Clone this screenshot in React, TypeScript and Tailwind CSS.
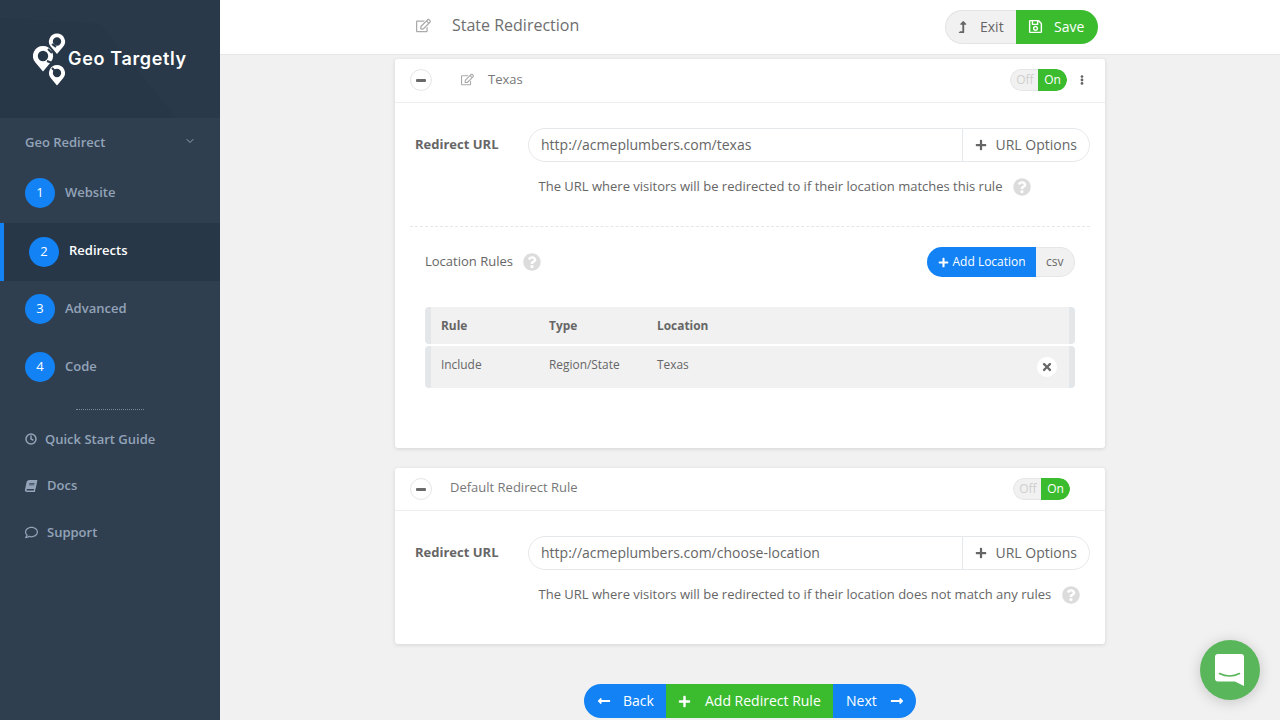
import React from "react";
import {
  FaRegEdit, FaRegSave, FaPlus, FaTimes, FaBook, FaRegComment, FaEllipsisV,
  FaQuestionCircle, FaLongArrowAltLeft, FaLongArrowAltRight, FaLevelUpAlt,
} from "react-icons/fa";
import { FiChevronDown, FiClock } from "react-icons/fi";

const PIN = "M0 -10 A10 10 0 0 1 7.6 6.5 L0 15.5 L-7.6 6.5 A10 10 0 0 1 0 -10Z M0 -5.2 A5.2 5.2 0 1 0 0 5.2 A5.2 5.2 0 1 0 0 -5.2Z";

function Logo() {
  return (
    <svg width="42" height="56" viewBox="0 0 42 56" className="shrink-0">
      <g fill="#fff" fillRule="evenodd">
        <path d={PIN} transform="translate(24,9.5) scale(.8)" />
        <path d={PIN} transform="translate(10,24) scale(1)" />
        <path d={PIN} transform="translate(24,41) scale(.8)" />
      </g>
      <g stroke="#283848" strokeWidth="2" fill="none">
        <path d="M19 12 L23 15" />
        <path d="M15 17 L19 21" />
        <path d="M14 29 L19 31" />
        <path d="M19 36 L22 39" />
      </g>
    </svg>
  );
}

function StepRow({ n, label, active }: { n: number; label: string; active?: boolean }) {
  return (
    <div
      className={
        active
          ? "h-[58px] flex items-start bg-[#283747] border-l-4 border-[#1282f4] pl-[25px] pt-[14px]"
          : "h-[58px] flex items-start pl-[25px] pt-[13px]"
      }
    >
      <div className="w-[30px] h-[30px] rounded-full bg-[#1282f4] text-white text-[13px] flex items-center justify-center">
        {n}
      </div>
      <span
        className={
          active
            ? "ml-[10px] mt-[4px] text-[13px] leading-[18px] font-semibold text-white"
            : "ml-[10px] mt-[5px] text-[13px] leading-[18px] font-semibold text-[#93a3b8]"
        }
      >
        {label}
      </span>
    </div>
  );
}

function LinkRow({ icon, label, gap }: { icon: React.ReactNode; label: string; gap: string }) {
  return (
    <div className={`h-[46.5px] flex items-center pl-[25px] text-[13px] font-semibold text-[#93a3b8] ${gap}`}>
      {icon}
      <span>{label}</span>
    </div>
  );
}

function Help() {
  return <FaQuestionCircle className="w-[18px] h-[18px] text-[#dcdcdc] shrink-0" />;
}

function Toggle() {
  return (
    <div className="flex h-[22px] w-[57px] rounded-full overflow-hidden text-[12px] leading-[22px]">
      <div className="w-[28px] bg-[#f1f1f1] text-[#cfcfcf] border border-r-0 border-[#e6e6e6] rounded-l-full text-center leading-[20px] pl-[1px]">Off</div>
      <div className="w-[29px] bg-[#3bbc2f] text-white rounded-r-full text-center">On</div>
    </div>
  );
}

function MinusBtn() {
  return (
    <div className="w-[22px] h-[22px] rounded-full border border-[#e6e6e6] bg-white flex items-center justify-center">
      <div className="w-[10px] h-[3px] rounded-[1px] bg-[#6a6a6a]" />
    </div>
  );
}

function UrlRow({ url }: { url: string }) {
  return (
    <div className="flex items-center pl-[20px] pr-[15px]">
      <div className="w-[113px] text-[13px] font-bold text-[#666]">Redirect URL</div>
      <div className="flex-1 h-[34px] flex border border-[#e6e9ec] rounded-full text-[14px] text-[#666]">
        <div className="flex-1 pl-[12px] leading-[32px]">{url}</div>
        <div className="w-[127px] border-l border-[#e6e9ec] flex items-center pl-[12px]">
          <FaPlus className="w-[12px] h-[12px] text-[#666] mr-[9px]" />
          <span className="-mt-[2px] -ml-[0.5px]">URL Options</span>
        </div>
      </div>
    </div>
  );
}

function RowAccent({ className, children }: { className: string; children: React.ReactNode }) {
  return (
    <div className={`flex bg-[#f1f1f1] border-x-[6px] border-x-[#e4e7ea] rounded-[4px] text-[11.9px] text-[#666] pl-[10px] ${className}`}>
      {children}
    </div>
  );
}

export default function App() {
  return (
    <div className="flex h-screen overflow-hidden bg-[#f1f1f1] font-['Open_Sans',sans-serif]">
      <aside className="w-[220px] shrink-0 bg-[#303f50]">
        <div className="relative h-[118px] bg-[#273747] overflow-hidden">
          <svg className="absolute inset-0" width="220" height="118" viewBox="0 0 220 118">
            <path d="M100 24 L122 0 L220 0 L220 118 L176 118 Z" fill="#293949" />
            <path d="M0 0 L122 0 L100 24 L0 18Z" fill="#293949" />
          </svg>
          <div className="relative flex items-center pl-[33px] pt-[32px]">
            <Logo />
            <span className="-ml-[7px] -mt-[4px] text-white text-[18px] font-semibold tracking-[.65px] font-['Inter',sans-serif]">Geo Targetly</span>
          </div>
        </div>
        <div className="h-[47px] flex items-center justify-between pl-[25px] pr-[24px] pt-[2px] text-[13px] font-semibold text-[#93a3b8]">
          <span>Geo Redirect</span>
          <FiChevronDown className="w-[12px] h-[12px] -mt-[4px]" />
        </div>
        <StepRow n={1} label="Website" />
        <StepRow n={2} label="Redirects" active />
        <StepRow n={3} label="Advanced" />
        <StepRow n={4} label="Code" />
        <div className="ml-[76px] w-[68px] mt-[12px] border-t border-dotted border-[#7d8895]" />
        <div className="mt-[6px]">
          <LinkRow icon={<FiClock strokeWidth={3} className="w-[12px] h-[12px]" />} label="Quick Start Guide" gap="gap-[8px]" />
          <LinkRow icon={<FaBook className="w-[12px] h-[12px] -skew-x-12" />} label="Docs" gap="gap-[10px]" />
          <LinkRow icon={<FaRegComment className="w-[13px] h-[13px]" />} label="Support" gap="gap-[9px]" />
        </div>
      </aside>

      <main className="flex-1 min-w-0 flex flex-col">
        <header className="h-[55px] shrink-0 bg-white border-b border-[#e6e6e6]">
          <div className="w-[710px] mx-auto h-full flex items-center pl-[21px] pr-[7px]">
            <FaRegEdit className="w-[15px] h-[15px] text-[#aaaaaa] -mt-[4px]" />
            <h1 className="ml-[21px] text-[16px] text-[#6e6e6e] font-normal -mt-[4px]">State Redirection</h1>
            <div className="ml-auto flex h-[34px] text-[14px] -mt-[1px]">
              <div className="w-[71px] bg-[#f1f1f1] border border-r-0 border-[#e3e3e3] rounded-l-full flex items-center pl-[11px] text-[#666]">
                <FaLevelUpAlt className="w-[11px] h-[12px] mr-[12px]" />
                <span>Exit</span>
              </div>
              <div className="w-[82px] bg-[#3bbc2f] rounded-r-full flex items-center pl-[12px] text-white">
                <FaRegSave className="w-[15px] h-[15px] mr-[11px]" />
                <span>Save</span>
              </div>
            </div>
          </div>
        </header>

        <div className="w-[710px] mx-auto pt-[4px]">
          <section className="bg-white rounded-[3px] shadow-[0_1px_4px_rgba(0,0,0,0.12)] h-[389px]">
            <div className="h-[44px] border-b border-[#eeeeee] flex items-start pt-[10px] pl-[15px] pr-[18px]">
              <MinusBtn />
              <FaRegEdit className="ml-[29px] mt-[4px] w-[13px] h-[13px] text-[#aaaaaa]" />
              <span className="ml-[14px] -mt-[1px] leading-[22px] text-[13px] text-[#777]">Texas</span>
              <div className="ml-auto flex items-center">
                <Toggle />
                <FaEllipsisV className="ml-[10px] -mt-[1px] w-[10px] h-[10px] text-[#666]" />
              </div>
            </div>
            <div className="pt-[25px]">
              <UrlRow url="http://acmeplumbers.com/texas" />
              <div className="flex items-center ml-[143.5px] mt-[16px] text-[13px] text-[#666] h-[18px]">
                <span>The URL where visitors will be redirected to if their location matches this rule</span>
                <span className="ml-[11px]"><Help /></span>
              </div>
              <div className="mx-[15px] mt-[30px] border-t border-dashed border-[#e6e6e6]" />
              <div className="mx-[30px] mt-[20px] flex items-center h-[30px]">
                <span className="text-[13px] text-[#666]">Location Rules</span>
                <span className="ml-[10px]"><Help /></span>
                <div className="ml-auto flex h-[30px] text-[12px]">
                  <div className="w-[109px] bg-[#1282f4] text-white rounded-l-full flex items-center pl-[11px]">
                    <FaPlus className="w-[11px] h-[11px] mr-[4px]" />
                    <span className="-ml-[0.5px]">Add Location</span>
                  </div>
                  <div className="w-[39px] bg-[#f1f1f1] border border-l-0 border-[#e6e6e6] rounded-r-full flex items-center pl-[10px] text-[#666]">csv</div>
                </div>
              </div>
              <div className="mx-[30px] mt-[30px]">
                <RowAccent className="h-[37px] items-center font-bold">
                  <span className="w-[108px]">Rule</span>
                  <span className="w-[108px]">Type</span>
                  <span>Location</span>
                </RowAccent>
                <RowAccent className="relative h-[42px] mt-[2px] items-start pt-[10px]">
                  <span className="w-[108px]">Include</span>
                  <span className="w-[108px]">Region/State</span>
                  <span>Texas</span>
                  <div className="absolute right-[12px] top-[11px] w-[20px] h-[20px] rounded-full bg-white flex items-center justify-center">
                    <FaTimes className="w-[12px] h-[12px] text-[#666]" />
                  </div>
                </RowAccent>
              </div>
            </div>
          </section>

          <section className="mt-[20px] bg-white rounded-[3px] shadow-[0_1px_4px_rgba(0,0,0,0.12)] h-[176px]">
            <div className="h-[43px] border-b border-[#eeeeee] flex items-center pl-[15px] pr-[35px]">
              <MinusBtn />
              <span className="ml-[18px] text-[13px] text-[#777] -mt-[2px]">Default Redirect Rule</span>
              <div className="ml-auto"><Toggle /></div>
            </div>
            <div className="pt-[25px]">
              <UrlRow url="http://acmeplumbers.com/choose-location" />
              <div className="flex items-center ml-[143.5px] mt-[16px] text-[13px] text-[#666] h-[18px]">
                <span>The URL where visitors will be redirected to if their location does not match any rules</span>
                <span className="ml-[11px]"><Help /></span>
              </div>
            </div>
          </section>

          <div className="mt-[40px] flex justify-center h-[34px] text-[14px] text-white">
            <div className="w-[82px] bg-[#1282f4] rounded-l-full flex items-center pl-[13px]">
              <FaLongArrowAltLeft className="w-[14px] h-[14px] mr-[12px]" />
              <span className="-mt-[2px]">Back</span>
            </div>
            <div className="w-[167px] bg-[#3bbc2f] flex items-center pl-[12px]">
              <FaPlus className="w-[13px] h-[13px] mr-[14px]" />
              <span className="-mt-[2px]">Add Redirect Rule</span>
            </div>
            <div className="w-[83px] bg-[#1282f4] rounded-r-full flex items-center pl-[13px]">
              <span className="-mt-[2px]">Next</span>
              <FaLongArrowAltRight className="w-[14px] h-[14px] ml-[13px]" />
            </div>
          </div>
        </div>
      </main>

      <div className="fixed left-[1200px] top-[640px] w-[60px] h-[60px] rounded-full bg-[#59b65a] shadow-[0_2px_14px_rgba(0,0,0,0.18)] flex items-center justify-center">
        <svg width="30" height="34" viewBox="0 0 30 34">
          <path d="M3 1 H26 A3 3 0 0 1 29 4 V33 L20 28.5 H3 A3 3 0 0 1 0 25.5 V4 A3 3 0 0 1 3 1Z" fill="#fff" />
          <path d="M4.500 20.500 Q14.500 25.500 24.500 20.500" fill="none" stroke="#59b65a" strokeWidth="1.600" strokeLinecap="round" />
        </svg>
      </div>
    </div>
  );
}
